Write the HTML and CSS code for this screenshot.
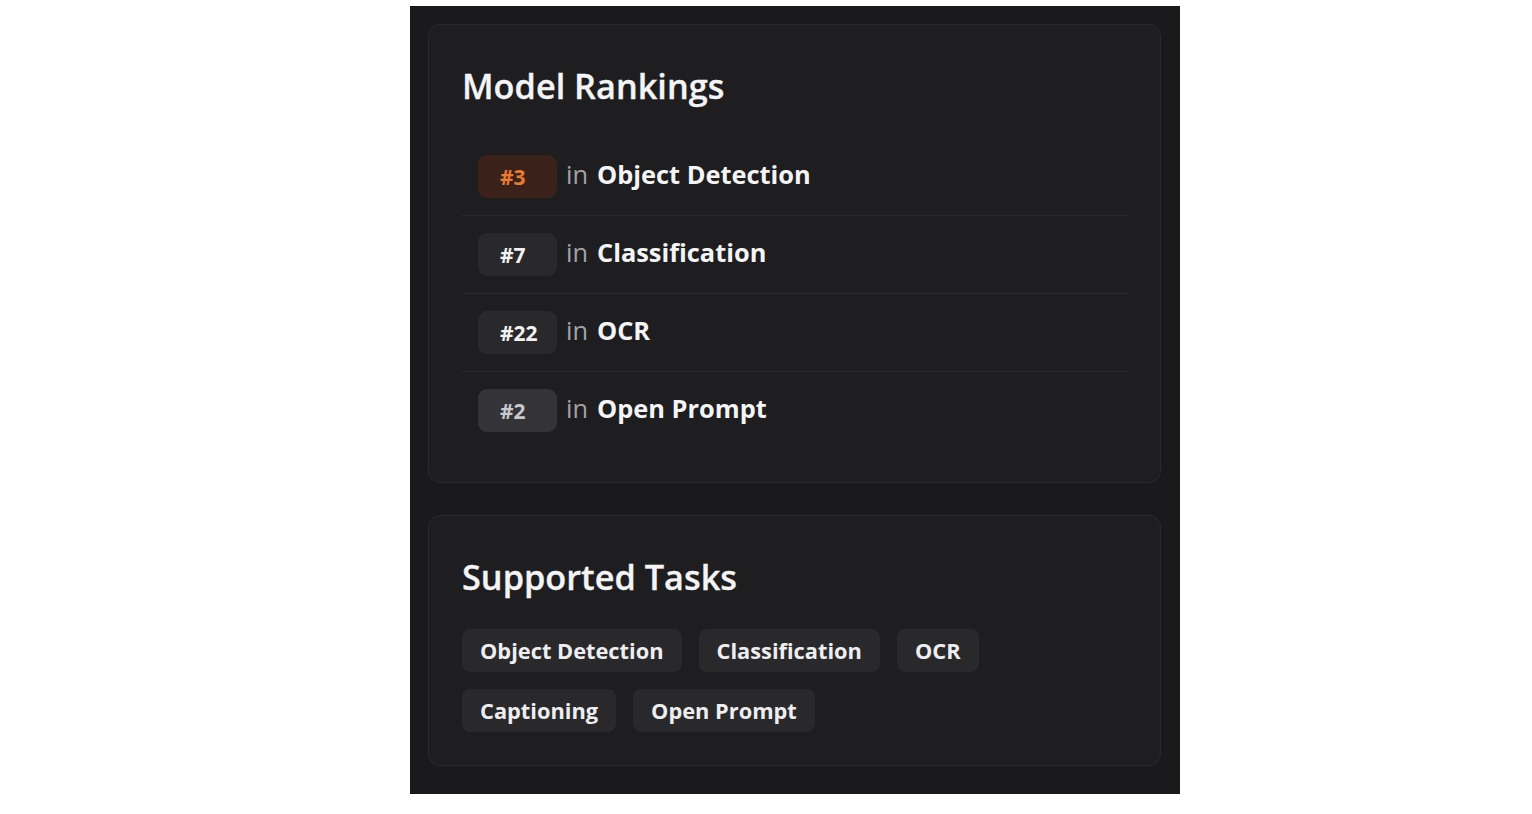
FILE: index.html
```html
<!DOCTYPE html>
<html lang="en">
<head>
<meta charset="utf-8">
<title>Model Rankings</title>
<link rel="stylesheet" href="styles.css">
</head>
<body>
<div class="panel">
  <section class="card">
    <h2 class="card-title">Model Rankings</h2>
    <ul class="rank-list">
      <li class="rank-row"><span class="rank-badge rank-top">#3</span><span class="rank-label"><span class="rank-in">in</span><span class="rank-task">Object Detection</span></span></li>
      <li class="rank-row"><span class="rank-badge">#7</span><span class="rank-label"><span class="rank-in">in</span><span class="rank-task">Classification</span></span></li>
      <li class="rank-row"><span class="rank-badge">#22</span><span class="rank-label"><span class="rank-in">in</span><span class="rank-task">OCR</span></span></li>
      <li class="rank-row"><span class="rank-badge rank-muted">#2</span><span class="rank-label"><span class="rank-in">in</span><span class="rank-task">Open Prompt</span></span></li>
    </ul>
  </section>
  <section class="card">
    <h2 class="card-title">Supported Tasks</h2>
    <div class="chips">
      <span class="chip">Object Detection</span>
      <span class="chip">Classification</span>
      <span class="chip">OCR</span>
      <span class="chip">Captioning</span>
      <span class="chip">Open Prompt</span>
    </div>
  </section>
</div>
</body>
</html>
```

FILE: styles.css
```css
html, body {
  margin: 0;
  padding: 0;
  background: #ffffff;
}
body {
  padding: 6px 0 0 410px;
  font-family: "Open Sans", "Noto Sans", "Liberation Sans", sans-serif;
}
.panel {
  width: 770px;
  box-sizing: border-box;
  background: #1a1a1c;
  padding: 18px 19px 28px 18px;
  display: flex;
  flex-direction: column;
  gap: 32px;
}
.card {
  background: #1e1e20;
  border: 1px solid #2a2a2d;
  border-radius: 12px;
  padding: 33px 32px 33px 33px;
}
.card-title {
  margin: 6px 0 30px 0;
  font-size: 34.3px;
  line-height: 44px;
  font-weight: 600;
  color: #f4f4f5;
  -webkit-text-stroke: 0.3px #f4f4f5;
}
.rank-list {
  list-style: none;
  margin: 0;
  padding: 0;
}
.rank-row {
  display: flex;
  align-items: center;
  padding: 17px 0 17px 16px;
  border-bottom: 1px solid #2a2a2d;
  font-size: 25.4px;
}
.rank-row:last-child {
  border-bottom: none;
}
.rank-badge {
  width: 79px;
  height: 43px;
  box-sizing: border-box;
  display: flex;
  align-items: center;
  padding-left: 22px;
  border-radius: 9px;
  background: #29292c;
  color: #f2f2f3;
  font-size: 21px;
  font-weight: 700;
  margin-right: 9px;
}
.rank-top {
  background: #3a2119;
  color: #ea7a32;
}
.rank-muted {
  background: #343438;
  color: #c9c9cd;
}
.rank-label {
  padding-bottom: 6px;
}
.rank-in {
  color: #a3a3a8;
  margin-right: 9px;
}
.rank-task {
  color: #f4f4f5;
  font-weight: 700;
}
.chips {
  display: flex;
  flex-wrap: wrap;
  gap: 17px 17px;
}
.chip {
  height: 43px;
  box-sizing: border-box;
  display: inline-flex;
  align-items: center;
  padding: 0 18px;
  border-radius: 8px;
  background: #29292c;
  color: #eeeef0;
  font-size: 21.8px;
  font-weight: 700;
}
```
